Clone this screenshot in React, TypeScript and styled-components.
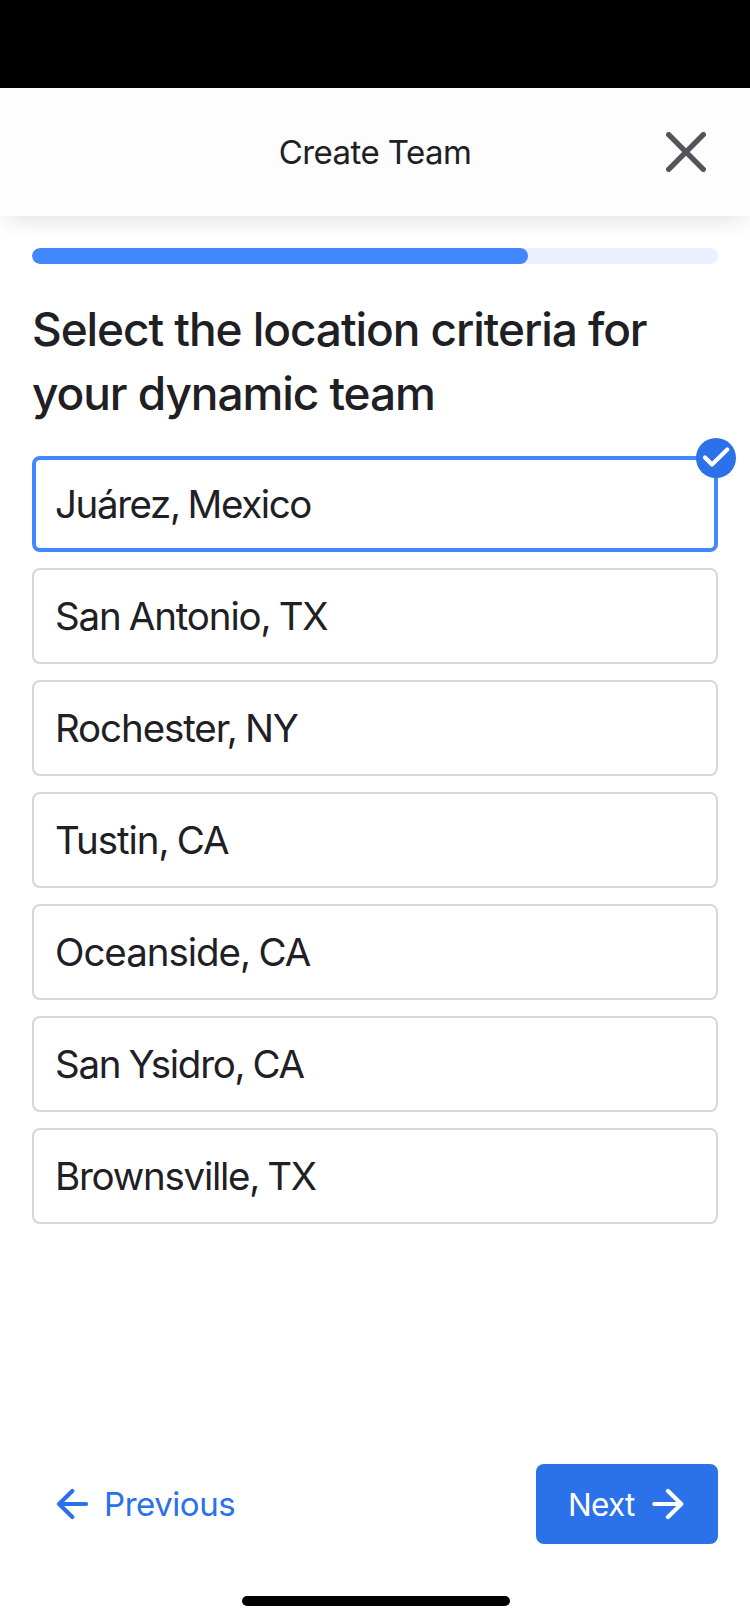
import React from 'react';
import styled, { createGlobalStyle } from 'styled-components';

const Global = createGlobalStyle`
  * { box-sizing: border-box; }
  body { margin: 0; background: #fff; font-family: Inter, "Liberation Sans", sans-serif; color: #202024; }
  button { font: inherit; border: 0; background: none; padding: 0; margin: 0; color: inherit; }
`;
const Screen = styled.div`
  height: 1624px;
  width: 750px;
  display: flex;
  flex-direction: column;
  background: #fff;
  overflow: hidden;
`;
const StatusBar = styled.div`
  height: 88px;
  background: #000;
  flex: none;
`;
const Header = styled.header`
  height: 128px;
  flex: none;
  background: #fdfdfd;
  box-shadow: 0 8px 24px -6px rgba(0, 0, 0, 0.14);
  display: grid;
  grid-template-columns: 1fr auto 1fr;
  align-items: center;
  padding: 0 44px;
`;
const Title = styled.h1`
  grid-column: 2;
  margin: 0;
  font-size: 33px;
  font-weight: 400;
  letter-spacing: -0.55px;
  white-space: nowrap;
`;
const Close = styled.button`
  justify-self: end;
  display: flex;
  color: #55545a;
`;
const Main = styled.main`
  flex: 1;
  padding: 32px 32px 0;
  display: flex;
  flex-direction: column;
`;
const Track = styled.div`
  height: 16px;
  border-radius: 8px;
  background: #e9f0ff;
  overflow: hidden;
`;
const Fill = styled.div<{ $value: number }>`
  height: 100%;
  width: ${p => p.$value}%;
  border-radius: 8px;
  background: #4287ff;
`;
const Question = styled.h2`
  margin: 33px 0 31px;
  font-size: 46px;
  line-height: 64px;
  font-weight: 500;
  letter-spacing: -1.07px;
`;
const Options = styled.div`
  display: flex;
  flex-direction: column;
  gap: 16px;
`;
const Option = styled.button<{ $selected?: boolean }>`
  position: relative;
  height: 96px;
  border: ${p => (p.$selected ? '4px solid #4287ff' : '2px solid #d6d6db')};
  border-radius: 8px;
  padding: 0 ${p => (p.$selected ? 19 : 21)}px;
  display: flex;
  align-items: center;
`;
const Label = styled.span<{ $tracking: number }>`
  font-size: 38.5px;
  letter-spacing: ${p => p.$tracking}px;
  word-spacing: -1.5px;
  white-space: nowrap;
`;
const Badge = styled.span`
  position: absolute;
  right: -22px;
  top: -22px;
  width: 40px;
  height: 40px;
  border-radius: 50%;
  background: #2a71ea;
  display: flex;
`;
const Footer = styled.footer`
  height: 80px;
  margin: 0 32px;
  display: flex;
  justify-content: space-between;
`;
const NavButton = styled.button<{ $primary?: boolean }>`
  display: flex;
  align-items: center;
  justify-content: space-between;
  gap: 16px;
  width: ${p => (p.$primary ? '182px' : 'auto')};
  height: 80px;
  border-radius: 8px;
  font-size: ${p => (p.$primary ? 31.5 : 33)}px;
  letter-spacing: ${p => (p.$primary ? -0.7 : -0.45)}px;
  color: ${p => (p.$primary ? '#fff' : '#2a71ea')};
  background: ${p => (p.$primary ? '#2a71ea' : 'transparent')};
  padding: 0 ${p => (p.$primary ? 34 : 24)}px 0 ${p => (p.$primary ? 32 : 24)}px;
`;
const HomeArea = styled.div`
  height: 80px;
  flex: none;
  display: flex;
  justify-content: center;
  align-items: flex-end;
  padding: 0 0 18px 2px;
`;
const HomeBar = styled.div`
  width: 268px;
  height: 10px;
  border-radius: 5px;
  background: #000;
`;

const places = [
  { name: 'Juárez, Mexico', tracking: -1.4 },
  { name: 'San Antonio, TX', tracking: -1.15 },
  { name: 'Rochester, NY', tracking: -1.1 },
  { name: 'Tustin, CA', tracking: -1.05 },
  { name: 'Oceanside, CA', tracking: -1.03 },
  { name: 'San Ysidro, CA', tracking: -1.25 },
  { name: 'Brownsville, TX', tracking: -1.25 },
];

const stroke = { fill: 'none', stroke: 'currentColor', strokeLinecap: 'round', strokeLinejoin: 'round' } as const;

export default function App() {
  return (
    <>
      <Global />
      <Screen>
        <StatusBar />
        <Header>
          <Title>Create Team</Title>
          <Close aria-label="Close">
            <svg width="40" height="40" viewBox="0 0 40 40" {...stroke} strokeWidth="5.4">
              <path d="M2.7 2.7 37.3 37.3M37.3 2.7 2.7 37.3" />
            </svg>
          </Close>
        </Header>
        <Main>
          <Track><Fill $value={72.3} /></Track>
          <Question>Select the location criteria for<br />your dynamic team</Question>
          <Options>
            {places.map((place, i) => (
              <Option key={place.name} $selected={i === 0}>
                <Label $tracking={place.tracking}>{place.name}</Label>
                {i === 0 && (
                  <Badge>
                    <svg width="40" height="40" viewBox="0 0 40 40" {...stroke} stroke="#fff" strokeWidth="4.2">
                      <path d="M9 19.5 16 26.5 31.3 11.6" />
                    </svg>
                  </Badge>
                )}
              </Option>
            ))}
          </Options>
        </Main>
        <Footer>
          <NavButton>
            <svg width="32" height="32" viewBox="0 0 32 32" {...stroke} strokeWidth="4.2">
              <path d="M30 16H3M16.3 3 3 16l13.3 13" />
            </svg>
            <span>Previous</span>
          </NavButton>
          <NavButton $primary>
            <span>Next</span>
            <svg width="32" height="32" viewBox="0 0 32 32" {...stroke} strokeWidth="4.2">
              <path d="M2.3 16h27M16 3l13.3 13L16 29" />
            </svg>
          </NavButton>
        </Footer>
        <HomeArea><HomeBar /></HomeArea>
      </Screen>
    </>
  );
}
